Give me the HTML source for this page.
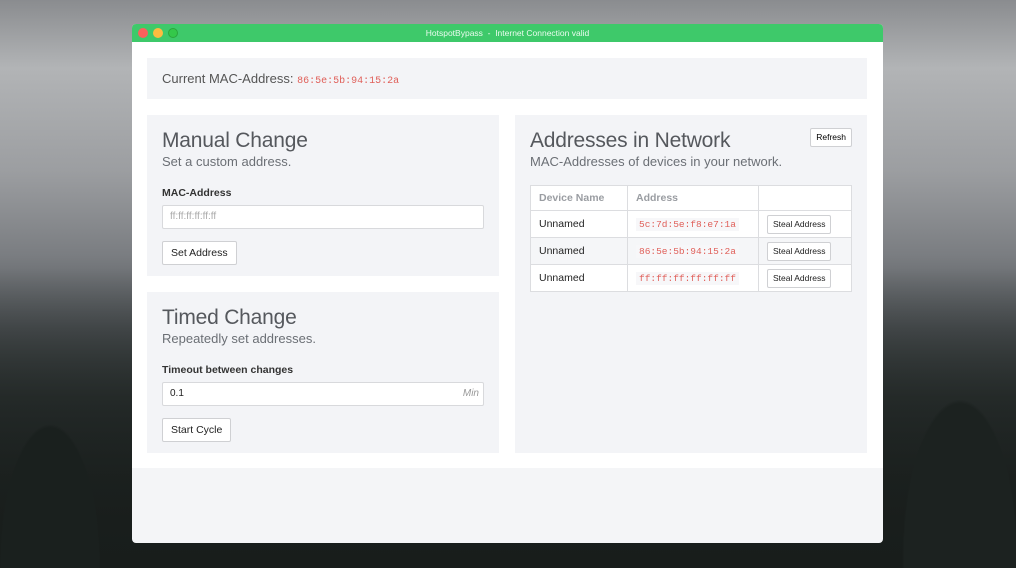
<!DOCTYPE html>
<html><head><meta charset="utf-8"><style>
*{box-sizing:border-box;margin:0;padding:0}
body{width:1016px;height:568px;overflow:hidden;position:relative;font-family:"Liberation Sans",sans-serif;
background:linear-gradient(180deg,#8a8c8f 0%,#b2b4b6 12%,#9c9ea1 30%,#7a7d81 45%,#4e5255 58%,#2e3333 70%,#1e2322 85%,#171b1a 100%);}
.bgtrees{position:absolute;left:0;right:0;bottom:0;height:300px;background:
radial-gradient(ellipse 70px 200px at 50px 300px,#1a201e 70%,transparent 72%),
radial-gradient(ellipse 80px 220px at 960px 290px,#1c2220 70%,transparent 72%),
linear-gradient(180deg,transparent 0%,rgba(30,36,34,.5) 35%,#181d1b 100%);}
.win{position:absolute;left:132px;top:24px;width:751px;height:519px;background:#f4f5f7;border-radius:4px;overflow:hidden}
.tb{height:18px;background:#3ec96a;position:relative;color:#eafbee;font-size:8.5px;text-align:center;line-height:18px}
.dot{position:absolute;top:4px;width:10px;height:10px;border-radius:50%}
.content{position:absolute;top:18px;left:0;width:751px;height:426px;background:#fff}
.p{position:absolute;background:#f3f4f7}
.mono{font-family:"Liberation Mono",monospace;color:#e0605a}
h2{font-weight:normal;font-size:21px;color:#55585d;letter-spacing:-0.2px}
.sub{font-size:13px;color:#6b6f75;margin-top:1px}
label{display:block;font-size:10.5px;font-weight:bold;color:#333;margin-top:18px}
.inp{height:24px;border:1px solid #d8d9dc;background:#fff;border-radius:2px;margin-top:6px;font-size:10px;line-height:22px;padding-left:7px;color:#aaa;position:relative}
.btn{display:inline-block;border:1px solid #cfd0d3;background:#fff;border-radius:2px;font-size:10.5px;color:#222;padding:0 8px;height:24px;line-height:22px;margin-top:12px}
table{border-collapse:collapse;width:322px;margin-top:16px;background:#fff;font-size:10.5px}
td{border:1px solid #dcdde0;height:27px;padding:0 8px;color:#222}
tr.h td{color:#9a9da2;font-weight:bold;height:25px}
tr.g td{background:#f5f6f8}
.sm{display:inline-block;border:1px solid #cfd0d3;background:#fff;border-radius:2px;font-size:8.5px;padding:0 5px;height:19px;line-height:17px}
.code{background:#f7f7f9;padding:1px 3px;font-size:9.5px}
</style></head><body>
<div class="bgtrees"></div>
<div class="win">
<div class="tb"><span class="dot" style="left:6px;background:#fc605c"></span><span class="dot" style="left:21px;background:#fdbc40"></span><span class="dot" style="left:36px;background:#34c84a;border:1px solid #2aa63c"></span>HotspotBypass &nbsp;-&nbsp; Internet Connection valid</div>
<div class="content">
<div class="p" style="left:15px;top:16px;width:720px;height:41px;padding:13px 15px;font-size:13px;color:#555">Current MAC-Address: <span class="mono" style="font-size:10px">86:5e:5b:94:15:2a</span></div>
<div class="p" style="left:15px;top:73px;width:352px;height:161px;padding:14px 15px">
<h2>Manual Change</h2><div class="sub">Set a custom address.</div>
<label>MAC-Address</label><div class="inp">ff:ff:ff:ff:ff:ff</div>
<div class="btn">Set Address</div></div>
<div class="p" style="left:15px;top:250px;width:352px;height:161px;padding:14px 15px">
<h2>Timed Change</h2><div class="sub">Repeatedly set addresses.</div>
<label>Timeout between changes</label><div class="inp" style="color:#222">0.1<span style="position:absolute;right:4px;color:#999;font-style:italic">Min</span></div>
<div class="btn">Start Cycle</div></div>
<div class="p" style="left:383px;top:73px;width:352px;height:338px;padding:14px 15px">
<div class="sm" style="position:absolute;right:15px;top:13px;height:19px">Refresh</div>
<h2>Addresses in Network</h2><div class="sub">MAC-Addresses of devices in your network.</div>
<table>
<tr class="h"><td style="width:97px">Device Name</td><td style="width:131px">Address</td><td></td></tr>
<tr><td>Unnamed</td><td><span class="mono code">5c:7d:5e:f8:e7:1a</span></td><td><span class="sm">Steal Address</span></td></tr>
<tr class="g"><td>Unnamed</td><td><span class="mono code">86:5e:5b:94:15:2a</span></td><td><span class="sm">Steal Address</span></td></tr>
<tr><td>Unnamed</td><td><span class="mono code">ff:ff:ff:ff:ff:ff</span></td><td><span class="sm">Steal Address</span></td></tr>
</table></div>
</div></div>
</body></html>
